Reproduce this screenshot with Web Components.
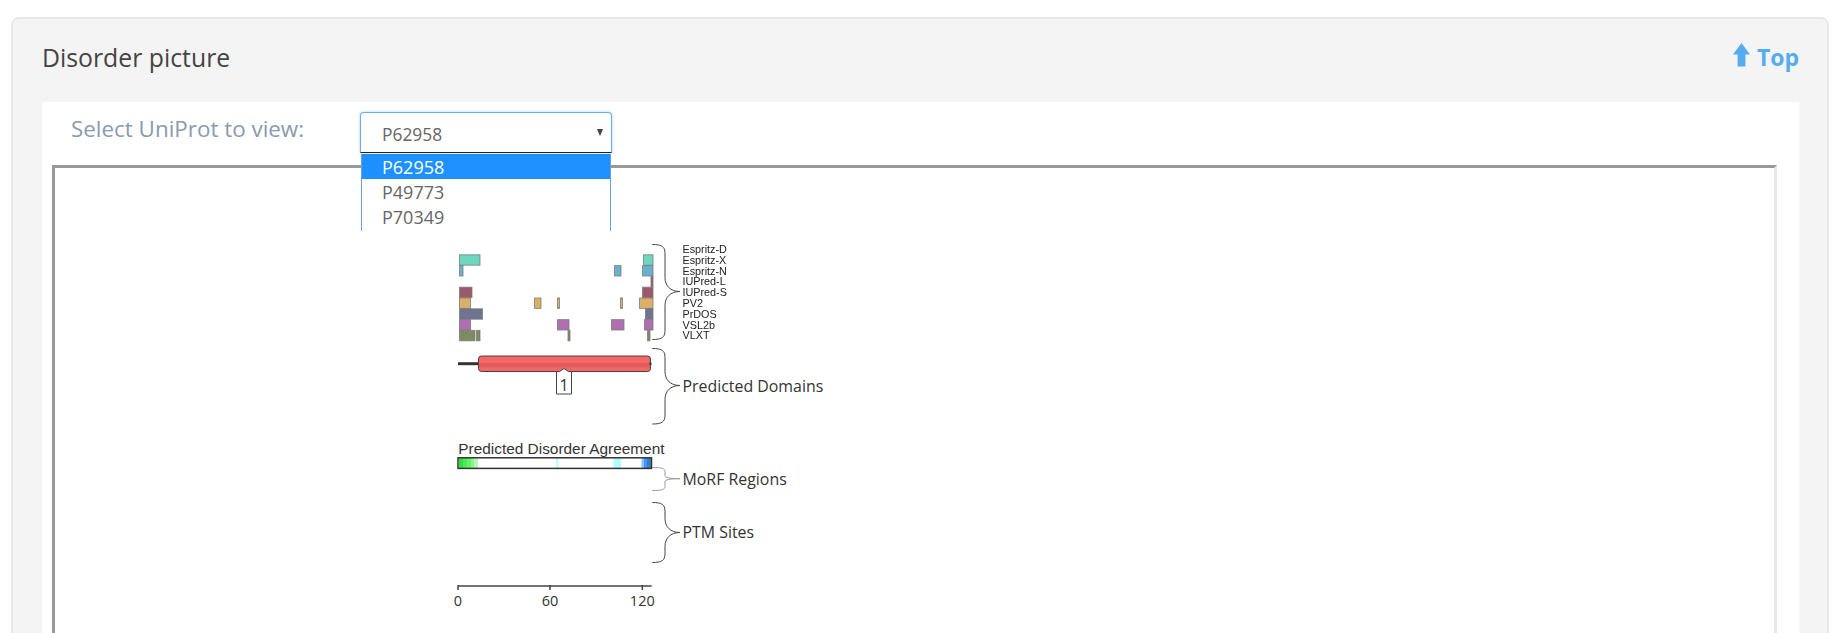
<!DOCTYPE html>
<html lang="en">
<head>
<meta charset="utf-8">
<title>Disorder picture</title>
<style>
  html, body { margin: 0; height: 633px; overflow: hidden; background: #fff; font-family: "Open Sans", sans-serif; }
  body { padding: 17px 17px 0 11px; box-sizing: border-box; }
</style>
</head>
<body>
<disorder-panel>
  <span slot="title">Disorder picture</span>
  <top-link slot="action" href="#top">Top</top-link>
  <uniprot-picker label="Select UniProt to view:" options="P62958,P49773,P70349"></uniprot-picker>
  <plot-frame><disorder-plot></disorder-plot></plot-frame>
</disorder-panel>

<script>
class DisorderPanel extends HTMLElement {
  connectedCallback() {
    let sr = this.attachShadow({ mode: 'open' });
    sr.innerHTML = `
      <style>
        :host { display: block; background: #f4f4f4; border: 2px solid #e8e8e8; border-bottom: 0; border-radius: 8px 8px 0 0; padding: 0 28px 0 29px; }
        header { height: 83px; display: flex; justify-content: space-between; align-items: flex-start; }
        h2 { margin: 20px 0 0 0; font: 400 24.8px/36px "Open Sans", sans-serif; color: #444; }
        .body { background: #fff; height: 700px; }
      </style>
      <header>
        <h2><slot name="title"></slot></h2>
        <slot name="action"></slot>
      </header>
      <div class="body"><slot></slot></div>
    `;
  }
}

class TopLink extends HTMLElement {
  connectedCallback() {
    let sr = this.attachShadow({ mode: 'open' });
    sr.innerHTML = `
      <style>
        :host { display: block; margin-top: 20px; }
        a { display: flex; align-items: center; gap: 7px; color: #55acee; font: 700 23px/36px "Open Sans", sans-serif; text-decoration: none; }
        svg { display: block; margin-top: -4px; }
      </style>
      <a href="${this.getAttribute('href')}">
        <svg width="17" height="24" viewBox="0 0 17 24"><path fill="#55acee" d="M8.5 0 17 11.5H12.4V23.5H4.6V11.5H0Z"/></svg>
        <span><slot></slot></span>
      </a>
    `;
  }
}

class UniprotPicker extends HTMLElement {
  get options() {
    return this.getAttribute('options').split(',');
  }

  connectedCallback() {
    let sr = this.attachShadow({ mode: 'open' });
    let items = this.options.map((o, i) => `<li class="${i === 0 ? 'on' : ''}">${o}</li>`).join('');
    sr.innerHTML = `
      <style>
        :host { display: flex; align-items: flex-start; height: 63px; padding: 10px 0 0 29px; box-sizing: border-box; }
        label { width: 289px; color: #8a9bad; font: 400 22.4px/34px "Open Sans", sans-serif; }
        .select { position: relative; width: 252px; height: 41px; box-sizing: border-box; border: 1px solid #66afe9; border-bottom-color: #222; border-radius: 4px 4px 0 0; box-shadow: 0 0 3px rgba(102,175,233,.6); background: #fff; color: #666; font: 400 17.4px/43px "Open Sans", sans-serif; padding-left: 21px; }
        .caret { position: absolute; right: 8px; top: 16px; width: 0; height: 0; border: 3.5px solid transparent; border-top: 7px solid #444; border-bottom: 0; }
        ul { position: absolute; z-index: 2; left: 0; top: 41px; width: 100%; height: 77px; box-sizing: border-box; overflow: hidden; margin: 0; padding: 0; list-style: none; background: #fff; border: solid #6f9fdc; border-width: 0 1px; font: 400 18px/27px "Open Sans", sans-serif; }
        li { height: 25px; padding-left: 20px; }
        li.on { background: #1e90ff; color: #fff; }
      </style>
      <label>${this.getAttribute('label')}</label>
      <div class="select">${this.options[0]}<span class="caret"></span><ul>${items}</ul></div>
    `;
  }
}

class PlotFrame extends HTMLElement {
  connectedCallback() {
    let sr = this.attachShadow({ mode: 'open' });
    sr.innerHTML = `
      <style>
        :host { display: block; margin: 0 22px 0 10px; height: 620px; box-sizing: border-box; border: 3px solid; border-color: #999 #e8e8e8 #e8e8e8 #999; }
      </style>
      <slot></slot>
    `;
  }
}

class DisorderPlot extends HTMLElement {
  /**
   * Predictor rows, each a list of [start, end] in page pixels
   */

  get rows() {
    return [
      { fill: '#6fd6bf', bars: [[459.5, 480], [643.5, 653]] },
      { fill: '#6ab0cf', bars: [[459.5, 463], [614.5, 621], [642.5, 653]] },
      { fill: '#a8566a', bars: [[651, 653]] },
      { fill: '#9a5a6a', bars: [[459.5, 472], [642.5, 653]] },
      { fill: '#dcb066', bars: [[459.5, 470.5], [534.5, 541], [557.5, 559.5], [620.5, 622.5], [639.5, 653]] },
      { fill: '#6f7590', bars: [[459.5, 482.5], [645.5, 653]] },
      { fill: '#b06fb0', bars: [[459.5, 470.5], [557.5, 569], [611.5, 624], [644.5, 653]] },
      { fill: '#7e8a62', bars: [[459.5, 475], [476.5, 480], [568, 570], [647.5, 650]] }
    ];
  }

  get labels() {
    return ['Espritz-D', 'Espritz-X', 'Espritz-N', 'IUPred-L', 'IUPred-S', 'PV2', 'PrDOS', 'VSL2b', 'VLXT'];
  }

  get agreement() {
    return [
      [459, 463, '#33e044'], [463, 467, '#4cec55'], [467, 471, '#66f066'], [471, 474, '#8cf48c'], [474, 478, '#b4f6b4'],
      [556.3, 558.3, '#b4fbff'], [613.5, 621, '#b4fbff'],
      [641.5, 644, '#88c4f8'], [644, 647, '#4a94ee'], [647, 650, '#3a78e0'], [650, 651, '#22aa66']
    ];
  }

  brace(top, mid, bottom, colour) {
    return `<path fill="none" stroke="${colour}" stroke-width="1" d="M652.3 ${top}C662 ${top} 665 ${top + 2} 665 ${top + 9}V${mid - 14}C665 ${mid - 6} 670 ${mid} 680 ${mid}C670 ${mid} 665 ${mid + 6} 665 ${mid + 14}V${bottom - 9}C665 ${bottom - 2} 662 ${bottom} 652.3 ${bottom}"/>`;
  }

  smallBrace(top, mid, bottom, colour) {
    return `<path fill="none" stroke="${colour}" stroke-width="1" d="M652.3 ${top}C662 ${top} 665 ${top + 1} 665 ${top + 4}V${mid - 3}C665 ${mid - 1} 670 ${mid} 680 ${mid}C670 ${mid} 665 ${mid + 1} 665 ${mid + 3}V${bottom - 4}C665 ${bottom - 1} 662 ${bottom} 652.3 ${bottom}"/>`;
  }

  get svg() {
    let rowH = 10.8;
    let bars = this.rows.map((r, i) => r.bars.map(b =>
      `<rect x="${b[0]}" y="${254.8 + i * rowH}" width="${b[1] - b[0]}" height="${rowH - .4}" fill="${r.fill}" stroke="#777" stroke-opacity=".75"/>`
    ).join('')).join('');
    let names = this.labels.map((n, i) => `<text class="small" x="682.5" y="${253 + i * 10.8}">${n}</text>`).join('');
    let stripes = this.agreement.map(s => `<rect x="${s[0]}" y="458" width="${s[1] - s[0]}" height="10" fill="${s[2]}"/>`).join('');

    return `
      <svg width="400" height="400" viewBox="440 230 400 400">
        <g class="soft">
          ${bars}
          ${this.brace(244.5, 291.5, 339.5, '#444')}
          ${names}
        </g>

        <path d="M458 363.7H478" stroke="#333" stroke-width="3"/>
        <rect x="478.5" y="356" width="172" height="15.5" rx="3" fill="#f56666" stroke="#444"/>
        <rect x="479" y="363" width="171" height="4.5" fill="#e25c5c"/>
        <path d="M650.5 362.5V365" stroke="#333" stroke-width="2"/>
        <path d="M556.5 394V371.5H559.5L564 368.5L568.5 371.5H571.5V394Z" fill="#fff" stroke="#444"/>
        <text class="mid" x="564" y="390.5" text-anchor="middle">1</text>
        ${this.brace(348.5, 385.5, 424, '#444')}
        <text class="mid" x="682.5" y="391.5">Predicted Domains</text>

        <text class="agree" x="458.3" y="454">Predicted Disorder Agreement</text>
        ${stripes}
        <rect x="458" y="457.8" width="193.5" height="10.6" fill="none" stroke="#333" stroke-width="1.5"/>
        ${this.smallBrace(467.5, 478.7, 490.5, '#999')}
        <text class="mid" x="682.5" y="484.5">MoRF Regions</text>
        ${this.brace(502.5, 532.5, 562.5, '#444')}
        <text class="mid" x="682.5" y="537.5">PTM Sites</text>

        <path d="M458 586H651.7M458 585V590M550 585V590M642.3 585V590" fill="none" stroke="#444" stroke-width="1.5"/>
        <text class="axis" x="458" y="606" text-anchor="middle">0</text>
        <text class="axis" x="550" y="606" text-anchor="middle">60</text>
        <text class="axis" x="642.3" y="606" text-anchor="middle">120</text>
      </svg>
    `;
  }

  connectedCallback() {
    let sr = this.attachShadow({ mode: 'open' });
    sr.innerHTML = `
      <style>
        :host { display: block; padding: 62px 0 0 385px; }
        svg { display: block; overflow: visible; }
        text { fill: #333; }
        .soft { filter: blur(.35px); }
        .small { font: 400 10.8px "Liberation Sans", Arial, sans-serif; fill: #222; }
        .mid { font: 400 15.9px "Open Sans", sans-serif; }
        .axis { font: 400 14.5px "Open Sans", sans-serif; }
        .agree { font: 400 15.4px "Liberation Sans", Arial, sans-serif; }
      </style>
      ${this.svg}
    `;
  }
}

customElements.define('disorder-panel', DisorderPanel);
customElements.define('top-link', TopLink);
customElements.define('uniprot-picker', UniprotPicker);
customElements.define('plot-frame', PlotFrame);
customElements.define('disorder-plot', DisorderPlot);
</script>
</body>
</html>
